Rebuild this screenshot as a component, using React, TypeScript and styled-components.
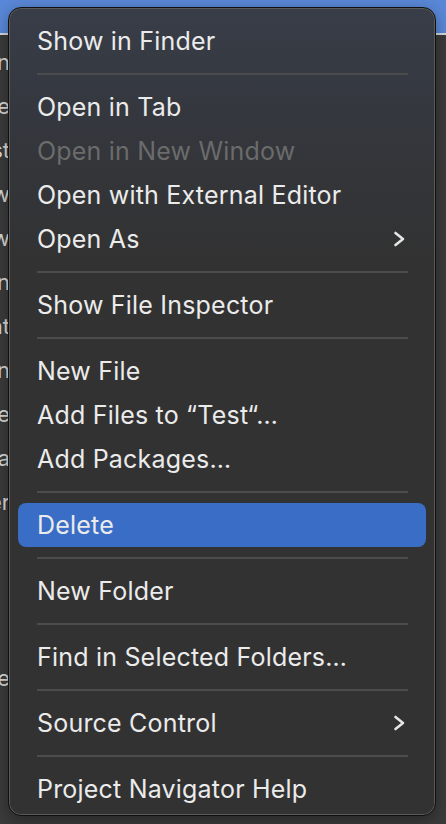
import React from 'react';
import styled, { createGlobalStyle } from 'styled-components';

type Entry =
  | { kind: 'item'; label: string; disabled?: boolean; active?: boolean; submenu?: boolean }
  | { kind: 'sep' };

const entries: Entry[] = [
  { kind: 'item', label: 'Show in Finder' },
  { kind: 'sep' },
  { kind: 'item', label: 'Open in Tab' },
  { kind: 'item', label: 'Open in New Window', disabled: true },
  { kind: 'item', label: 'Open with External Editor' },
  { kind: 'item', label: 'Open As', submenu: true },
  { kind: 'sep' },
  { kind: 'item', label: 'Show File Inspector' },
  { kind: 'sep' },
  { kind: 'item', label: 'New File' },
  { kind: 'item', label: 'Add Files to \u201cTest\u201c\u2026' },
  { kind: 'item', label: 'Add Packages\u2026' },
  { kind: 'sep' },
  { kind: 'item', label: 'Delete', active: true },
  { kind: 'sep' },
  { kind: 'item', label: 'New Folder' },
  { kind: 'sep' },
  { kind: 'item', label: 'Find in Selected Folders\u2026' },
  { kind: 'sep' },
  { kind: 'item', label: 'Source Control', submenu: true },
  { kind: 'sep' },
  { kind: 'item', label: 'Project Navigator Help' },
];

// words peeking out from the navigator behind the menu
const sidebarRows = ['Main', 'Style', 'Test', 'View', 'View', 'Main', 'Content', 'Main', 'Style', 'Data', 'Folder', '', '', '', 'Te'];

export default function App() {
  return (
    <>
      <GlobalStyle />
      <Page>
        <TitleStrip />
        <Body>
          <Sidebar>
            {sidebarRows.map((w, i) => (
              <SideRow key={i}>{w}</SideRow>
            ))}
          </Sidebar>
        </Body>
        <Menu>
          {entries.map((e, i) =>
            e.kind === 'sep' ? (
              <Separator key={i}>
                <Line />
              </Separator>
            ) : (
              <Item key={i} $active={e.active} $disabled={e.disabled}>
                <Label>{e.label}</Label>
                {e.submenu && (
                  <svg width="13" height="16" viewBox="0 0 13 16">
                    <path d="M2.5 2 L10 8 L2.5 14" fill="none" stroke="#e6e6e6" strokeWidth="2.6" strokeLinecap="round" strokeLinejoin="round" />
                  </svg>
                )}
              </Item>
            )
          )}
        </Menu>
      </Page>
    </>
  );
}

const GlobalStyle = createGlobalStyle`
  html, body {
    margin: 0;
    padding: 0;
    background: #3a3a3a;
  }
  body {
    font-family: Inter, "Liberation Sans", sans-serif;
  }
`;

const Page = styled.div`
  position: relative;
  width: 446px;
  height: 824px;
  overflow: hidden;
  display: flex;
  flex-direction: column;
  background: #3a3a3a;
`;

const TitleStrip = styled.div`
  height: 33px;
  background: #5a88d8;
  border-bottom: 2px solid #d6d9de;
  flex-shrink: 0;
`;

const Body = styled.div`
  flex: 1;
  display: flex;
  background: #3b3b3b;
`;

const Sidebar = styled.div`
  width: 10px;
  overflow: hidden;
  padding-top: 5px;
  display: flex;
  flex-direction: column;
`;

const SideRow = styled.div`
  height: 44px;
  display: flex;
  justify-content: flex-end;
  align-items: center;
  white-space: nowrap;
  font-size: 22px;
  color: #d8d8d8;
`;

const Menu = styled.div`
  position: absolute;
  top: 7px;
  left: 8px;
  width: 428px;
  height: 809px;
  box-sizing: border-box;
  padding: 11px 0 6px;
  border-radius: 13px;
  border: 1px solid #101010;
  box-shadow: inset 0 0 0 1px #5a5a5a, 0 4px 16px rgba(0, 0, 0, 0.35);
  background: linear-gradient(180deg, #383d48 0%, #34373d 14%, #323232 32%, #323232 100%);
  display: flex;
  flex-direction: column;
`;

const Item = styled.div<{ $active?: boolean; $disabled?: boolean }>`
  height: 44px;
  flex-shrink: 0;
  margin: 0 9px;
  padding: 0 20px 0 19px;
  border-radius: 8px;
  display: flex;
  align-items: center;
  justify-content: space-between;
  background: ${(p) => (p.$active ? '#3a6dc5' : 'transparent')};
  color: ${(p) => (p.$disabled ? '#6b6b6b' : '#ebebeb')};
`;

const Label = styled.span`
  font-size: 25px;
  letter-spacing: 0.2px;
  line-height: 1;
`;

const Separator = styled.div`
  height: 22px;
  flex-shrink: 0;
  padding: 0 27px 0 28px;
  display: flex;
  align-items: center;
`;

const Line = styled.div`
  flex: 1;
  height: 2px;
  background: #4c4c4c;
`;
